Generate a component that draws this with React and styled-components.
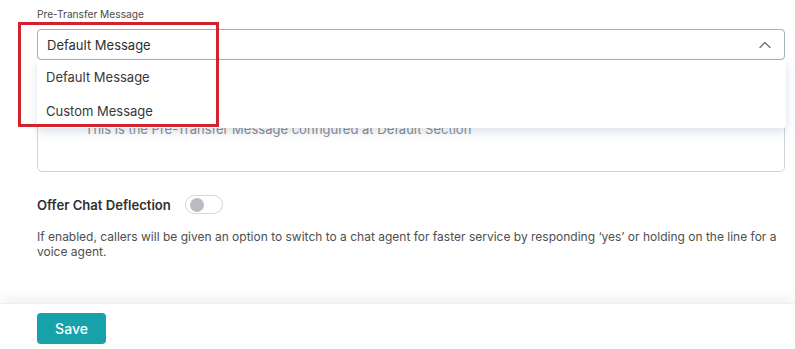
import React, { useState } from "react";
import styled, { createGlobalStyle } from "styled-components";

const GlobalStyle = createGlobalStyle`
  body {
    margin: 0;
    background: #ffffff;
    font-family: Inter, "Noto Sans", "Liberation Sans", sans-serif;
    color: #333;
  }
`;

const Page = styled.div`
  width: 795px;
  height: 349px;
  display: flex;
  flex-direction: column;
  overflow: hidden;
`;

const Form = styled.div`
  padding: 7px 10px 0 37px;
  display: flex;
  flex-direction: column;
  flex: 1;
`;

const Label = styled.div`
  font-size: 10.2px;
  line-height: 14px;
  color: #4a4a4a;
  margin-bottom: 8px;
`;

const SelectWrap = styled.div`
  position: relative;
  z-index: 2;
`;

const SelectBox = styled.div`
  height: 29px;
  border: 1px solid #9db3b8;
  border-radius: 4px;
  display: flex;
  align-items: center;
  justify-content: space-between;
  padding: 0 12px 0 9px;
  font-size: 13px;
  color: #2f2f2f;
  background: #fff;
`;

const Menu = styled.div`
  position: absolute;
  top: 100%;
  left: 0;
  right: -1px;
  height: 68px;
  background: #fff;
  box-shadow: 0 4px 10px rgba(40, 70, 110, 0.16);
  border-radius: 0 0 3px 3px;
  display: flex;
  flex-direction: column;
`;

const MenuItem = styled.div`
  height: 34px;
  display: flex;
  align-items: center;
  padding-left: 9px;
  font-size: 13px;
  color: #383838;
`;

const Highlight = styled.div`
  position: absolute;
  left: -19px;
  top: -7px;
  width: 195px;
  height: 99px;
  border: 3px solid #d2222c;
  pointer-events: none;
`;

const TextBox = styled.div`
  margin-top: 8px;
  height: 104px;
  border: 1px solid #cfd3d6;
  border-radius: 5px;
  padding: 52px 0 0 47px;
  box-sizing: border-box;
  font-size: 13px;
  color: #8a8d91;
  line-height: 16px;
  position: relative;
  z-index: 1;
`;

const ToggleRow = styled.div`
  margin-top: 23px;
  display: flex;
  align-items: center;
  gap: 14px;
`;

const ToggleLabel = styled.span`
  font-size: 13.1px;
  font-weight: 600;
  color: #303030;
`;

const Switch = styled.button`
  width: 38px;
  height: 19px;
  border-radius: 10px;
  border: 1px solid #d4d6d9;
  background: #fff;
  padding: 0 0 0 4px;
  display: flex;
  align-items: center;
  cursor: pointer;
  justify-content: ${(p) => (p.$on ? "flex-end" : "flex-start")};
`;

const Knob = styled.span`
  width: 14px;
  height: 14px;
  border-radius: 50%;
  background: #b9bcc1;
`;

const Help = styled.p`
  margin: 15px 0 0;
  font-size: 12px;
  line-height: 15px;
  color: #4e4e4e;
`;

const Footer = styled.div`
  height: 46px;
  border-top: 1px solid #eceef1;
  box-shadow: 0 -6px 10px rgba(150, 160, 175, 0.12);
  padding: 9px 0 0 37px;
  box-sizing: border-box;
`;

const SaveButton = styled.button`
  width: 69px;
  height: 31px;
  border: none;
  border-radius: 4px;
  background: #17a2aa;
  color: #fff;
  font-family: inherit;
  font-size: 14px;
  font-weight: 500;
  cursor: pointer;
`;

function Chevron() {
  return (
    <svg width="14" height="14" viewBox="0 0 14 14" fill="none">
      <path d="M2 9.5L7 4.5L12 9.5" stroke="#6f7478" strokeWidth="1.4" strokeLinecap="round" strokeLinejoin="round" />
    </svg>
  );
}

export default function App() {
  const [on, setOn] = useState(false);
  return (
    <>
      <GlobalStyle />
      <Page>
        <Form>
          <Label>Pre-Transfer Message</Label>
          <SelectWrap>
            <SelectBox>
              <span>Default Message</span>
              <Chevron />
            </SelectBox>
            <Menu>
              <MenuItem>Default Message</MenuItem>
              <MenuItem>Custom Message</MenuItem>
            </Menu>
            <Highlight />
          </SelectWrap>
          <TextBox>This is the Pre-Transfer Message configured at Default Section</TextBox>
          <ToggleRow>
            <ToggleLabel>Offer Chat Deflection</ToggleLabel>
            <Switch $on={on} onClick={() => setOn(!on)}>
              <Knob />
            </Switch>
          </ToggleRow>
          <Help>
            If enabled, callers will be given an option to switch to a chat agent for faster service by responding ‘yes’ or holding on the line for a voice agent.
          </Help>
        </Form>
        <Footer>
          <SaveButton>Save</SaveButton>
        </Footer>
      </Page>
    </>
  );
}
